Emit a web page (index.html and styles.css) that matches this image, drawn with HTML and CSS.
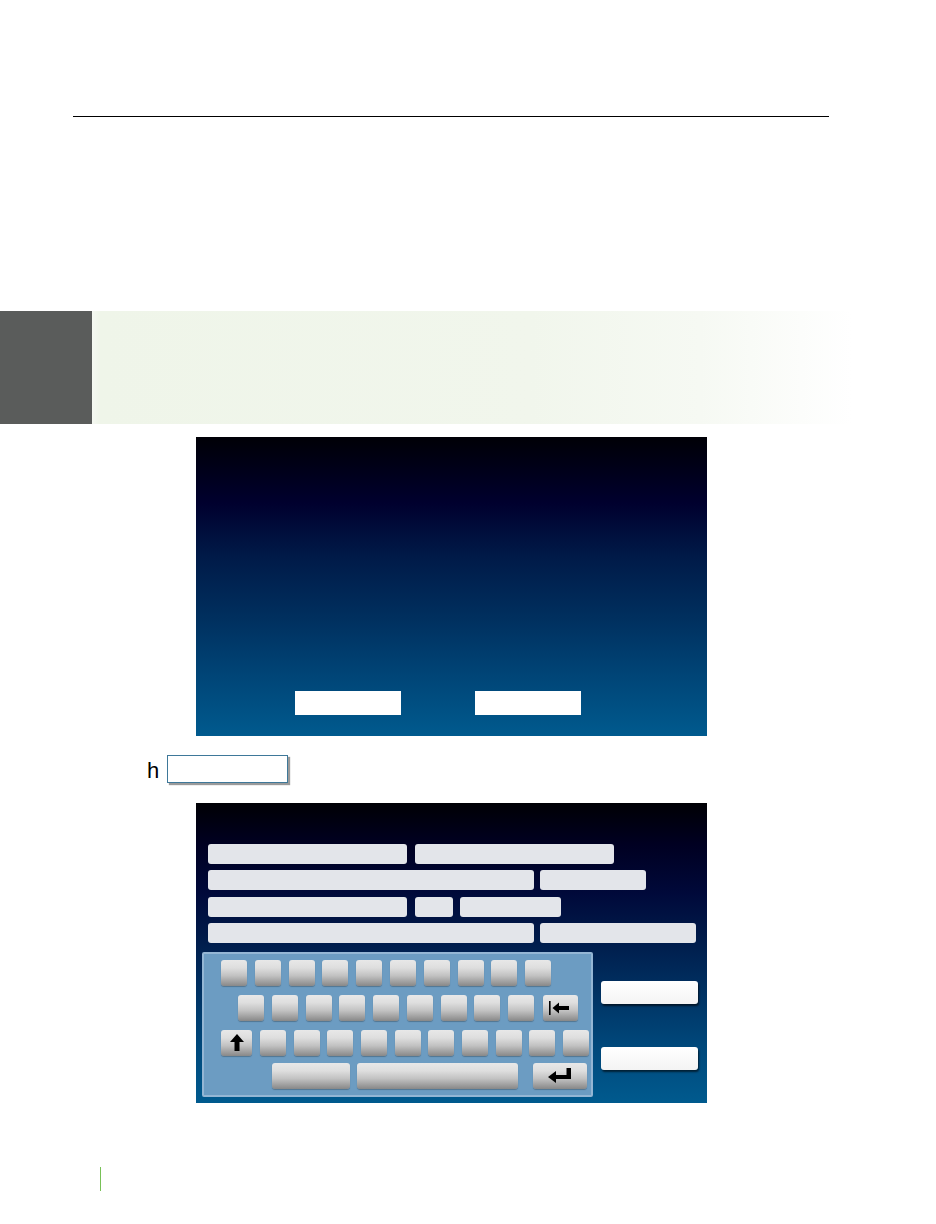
FILE: index.html
```html
<!DOCTYPE html>
<html lang="en">
<head>
<meta charset="utf-8">
<title>Keyboard screen</title>
<link rel="stylesheet" href="styles.css">
</head>
<body>
<div class="page">
  <header class="head"><div class="rule"></div></header>

  <section class="band">
    <div class="tab"></div>
    <div class="wash"></div>
  </section>

  <div class="screen screen-a">
    <div class="dialog-btns">
      <span class="wbtn"></span>
      <span class="wbtn"></span>
    </div>
  </div>

  <div class="hrow">
    <span class="hletter">h</span>
    <span class="hbox"></span>
  </div>

  <div class="screen screen-b">
    <div class="fields">
      <div class="frow"><span class="fld w199"></span><span class="fld w199 g8"></span></div>
      <div class="frow"><span class="fld w326"></span><span class="fld w106 g6"></span></div>
      <div class="frow"><span class="fld w199"></span><span class="fld w38 g8"></span><span class="fld w101 g7"></span></div>
      <div class="frow"><span class="fld w326"></span><span class="fld w156 g6"></span></div>
    </div>
    <div class="lower">
      <div class="kbd">
        <div class="krow r1">
          <span class="key"></span><span class="key"></span><span class="key"></span><span class="key"></span><span class="key"></span>
          <span class="key"></span><span class="key"></span><span class="key"></span><span class="key"></span><span class="key"></span>
        </div>
        <div class="krow r2">
          <span class="key"></span><span class="key"></span><span class="key"></span><span class="key"></span><span class="key"></span>
          <span class="key"></span><span class="key"></span><span class="key"></span><span class="key"></span>
          <span class="key bksp"><svg width="22" height="14" viewBox="0 0 22 14"><rect x="0" y="0" width="1.6" height="14" fill="#000"/><polygon points="3.5,7 10,1.5 10,5 20,5 20,9 10,9 10,12.5" fill="#000"/></svg></span>
        </div>
        <div class="krow r3">
          <span class="key shift"><svg width="14" height="17" viewBox="0 0 14 17"><polygon points="7,0 14,8 9.5,8 9.5,17 4.5,17 4.5,8 0,8" fill="#000"/></svg></span>
          <span class="key"></span><span class="key"></span><span class="key"></span><span class="key"></span><span class="key"></span>
          <span class="key"></span><span class="key"></span><span class="key"></span><span class="key"></span><span class="key"></span>
        </div>
        <div class="krow r4">
          <span class="key k78"></span>
          <span class="key space"></span>
          <span class="key enter"><svg width="24" height="15" viewBox="0 0 24 15"><polygon points="0,9 8,3 8,7 18.5,7 18.5,0 23,0 23,11 8,11 8,15" fill="#000"/></svg></span>
        </div>
      </div>
      <div class="side">
        <span class="sbtn"></span>
        <span class="sbtn second"></span>
      </div>
    </div>
  </div>

  <footer class="foot"><div class="bar"></div></footer>
</div>
</body>
</html>
```

FILE: styles.css
```css
html, body {
  margin: 0;
  padding: 0;
  background: #ffffff;
}

.page {
  width: 936px;
  height: 1224px;
  overflow: hidden;
  font-family: "Liberation Sans", Arial, sans-serif;
}

.head {
  padding-top: 116px;
}

.rule {
  margin-left: 73px;
  width: 756px;
  height: 1px;
  background: #000;
}

.band {
  margin-top: 194px;
  height: 113px;
  display: flex;
}

.tab {
  width: 92px;
  background: #5a5c5b;
}

.wash {
  flex: 1;
  background: linear-gradient(to right, #f5f8f2 0%, #eff5e9 1%, #f1f6ec 52%, #f6f9f3 72%, #ffffff 90%);
}

.screen {
  margin-left: 196px;
  width: 511px;
  background: linear-gradient(to bottom, #000006 0%, #00002e 22%, #001a48 40%, #002f5e 60%, #004577 80%, #005a8e 100%);
}

.screen-a {
  margin-top: 13px;
  height: 299px;
  padding-top: 254px;
  box-sizing: border-box;
}

.dialog-btns {
  display: flex;
  margin-left: 99px;
  gap: 74px;
}

.wbtn {
  display: block;
  width: 106px;
  height: 24px;
  background: #ffffff;
}

.hrow {
  margin-top: 19px;
  height: 29px;
  margin-left: 147px;
  display: flex;
  align-items: flex-start;
}

.hletter {
  font-size: 22px;
  line-height: 22px;
  margin-top: 5px;
  color: #000;
  width: 20px;
}

.hbox {
  display: block;
  width: 119px;
  height: 26px;
  border: 1px solid #3e7899;
  background: #fff;
  box-shadow: 2px 2px 1px #9a9a9a;
}

.screen-b {
  margin-top: 19px;
  height: 300px;
  padding-top: 41px;
  box-sizing: border-box;
  background: linear-gradient(to bottom, #000004 0%, #000022 14%, #00093a 30%, #001b4a 45%, #003465 65%, #00497c 82%, #005a8e 100%);
}

.fields {
  margin-left: 12px;
  display: flex;
  flex-direction: column;
  gap: 6.33px;
}

.frow {
  display: flex;
  height: 20px;
}

.fld {
  display: block;
  height: 20px;
  background: #e3e5ea;
  border-radius: 3px;
}

.w199 { width: 199px; }
.w326 { width: 326px; }
.w106 { width: 106px; }
.w38 { width: 38px; }
.w101 { width: 101px; }
.w156 { width: 156px; }
.g6 { margin-left: 6px; }
.g7 { margin-left: 7px; }
.g8 { margin-left: 8px; }

.lower {
  margin-top: 9px;
  display: flex;
}

.kbd {
  margin-left: 6px;
  width: 391px;
  height: 145px;
  box-sizing: border-box;
  background: #6c9cc2;
  border: 2px solid #94b6d4;
  border-radius: 2px;
  padding-top: 6px;
}

.krow {
  display: flex;
  height: 26px;
}

.r1 { margin-left: 17px; gap: 7.8px; }
.r2 { margin-left: 34px; gap: 7.75px; margin-top: 9px; }
.r3 { margin-left: 17px; gap: 7.7px; margin-top: 9px; }
.r4 { margin-left: 68px; margin-top: 7px; }

.key {
  display: flex;
  align-items: center;
  justify-content: center;
  width: 26px;
  height: 26px;
  border-radius: 3px;
  background: linear-gradient(to bottom, #e8e8e8 0%, #dedede 30%, #c2c2c2 60%, #888888 100%);
  box-shadow: 0 1px 1px rgba(0, 0, 0, 0.25);
}

.bksp { width: 35px; margin-left: 1px; }
.shift { width: 31px; margin-right: 0.3px; }
.k78 { width: 78px; }
.space { width: 161px; margin-left: 7px; }
.enter { width: 54px; margin-left: 15px; }

.side {
  margin-left: 8px;
  padding-top: 29px;
  display: flex;
  flex-direction: column;
}

.sbtn {
  display: block;
  width: 97px;
  height: 23px;
  border-radius: 3px;
  background: linear-gradient(to bottom, #ffffff 0%, #f4f4f4 100%);
  box-shadow: 1px 2px 2px rgba(0, 0, 0, 0.6);
}

.sbtn.second {
  margin-top: 43px;
}

.foot {
  margin-top: 64px;
}

.bar {
  margin-left: 100px;
  width: 1px;
  height: 24px;
  background: #78c157;
}
```
